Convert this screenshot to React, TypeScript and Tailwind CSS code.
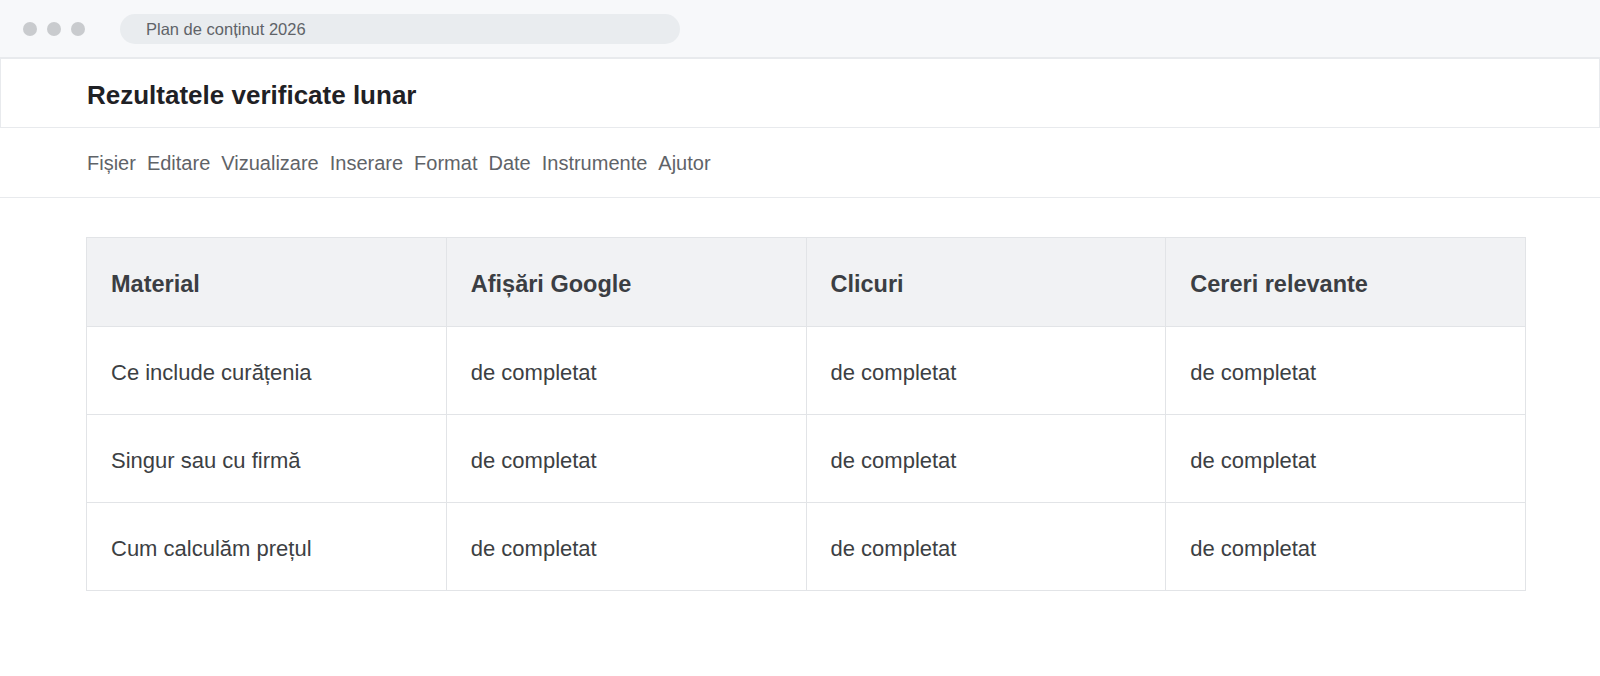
import React from 'react';

const menuItems = ['Fișier', 'Editare', 'Vizualizare', 'Inserare', 'Format', 'Date', 'Instrumente', 'Ajutor'];

const columns = ['Material', 'Afișări Google', 'Clicuri', 'Cereri relevante'];

const rows = [
    {material: 'Ce include curățenia', values: ['de completat', 'de completat', 'de completat']},
    {material: 'Singur sau cu firmă', values: ['de completat', 'de completat', 'de completat']},
    {material: 'Cum calculăm prețul', values: ['de completat', 'de completat', 'de completat']},
];

export default function App() {
    return (
        <div className="min-h-screen bg-white font-['Liberation_Sans',Arial,sans-serif]">
            {/* window chrome */}
            <div className="flex h-[58px] items-center border-b border-[#e8eaed] bg-[#f7f8fa] pl-[23px]">
                <div className="flex gap-[10px]">
                    <span className="h-[14px] w-[14px] rounded-full bg-[#c9cbce]"/>
                    <span className="h-[14px] w-[14px] rounded-full bg-[#c9cbce]"/>
                    <span className="h-[14px] w-[14px] rounded-full bg-[#c9cbce]"/>
                </div>
                <div className="ml-[35px] flex h-[30px] w-[560px] items-center rounded-full bg-[#e9ecef] pl-[26px] pt-[2px] text-[16.5px] text-[#5f6368]">
                    Plan de conținut 2026
                </div>
            </div>

            {/* document title */}
            <div className="flex h-[70px] items-center border border-[#e8eaed] pl-[86px] pt-[4px]">
                <h1 className="text-[26px] font-bold text-[#1f2125]">Rezultatele verificate lunar</h1>
            </div>

            {/* menu */}
            <nav className="flex h-[70px] items-center gap-[11px] border-b border-[#e8eaed] pl-[87px] text-[20px] text-[#5f6368]">
                {menuItems.map((item) => (
                    <span key={item}>{item}</span>
                ))}
            </nav>

            <table className="ml-[86px] mt-[39px] w-[1440px] table-fixed border-collapse">
                <thead>
                    <tr className="bg-[#f1f2f4]">
                        {columns.map((col) => (
                            <th
                                key={col}
                                className="h-[89px] border border-[#e2e4e7] px-[24px] pt-[6px] text-left text-[23.5px] font-bold text-[#3b3e43]"
                            >
                                {col}
                            </th>
                        ))}
                    </tr>
                </thead>
                <tbody>
                    {rows.map((row) => (
                        <tr key={row.material}>
                            <td className="h-[88px] border border-[#e2e4e7] px-[24px] pt-[4px] text-[22px] text-[#3c4043]">
                                {row.material}
                            </td>
                            {row.values.map((v, i) => (
                                <td key={i} className="h-[88px] border border-[#e2e4e7] px-[24px] pt-[4px] text-[22px] text-[#3c4043]">
                                    {v}
                                </td>
                            ))}
                        </tr>
                    ))}
                </tbody>
            </table>
        </div>
    );
}
